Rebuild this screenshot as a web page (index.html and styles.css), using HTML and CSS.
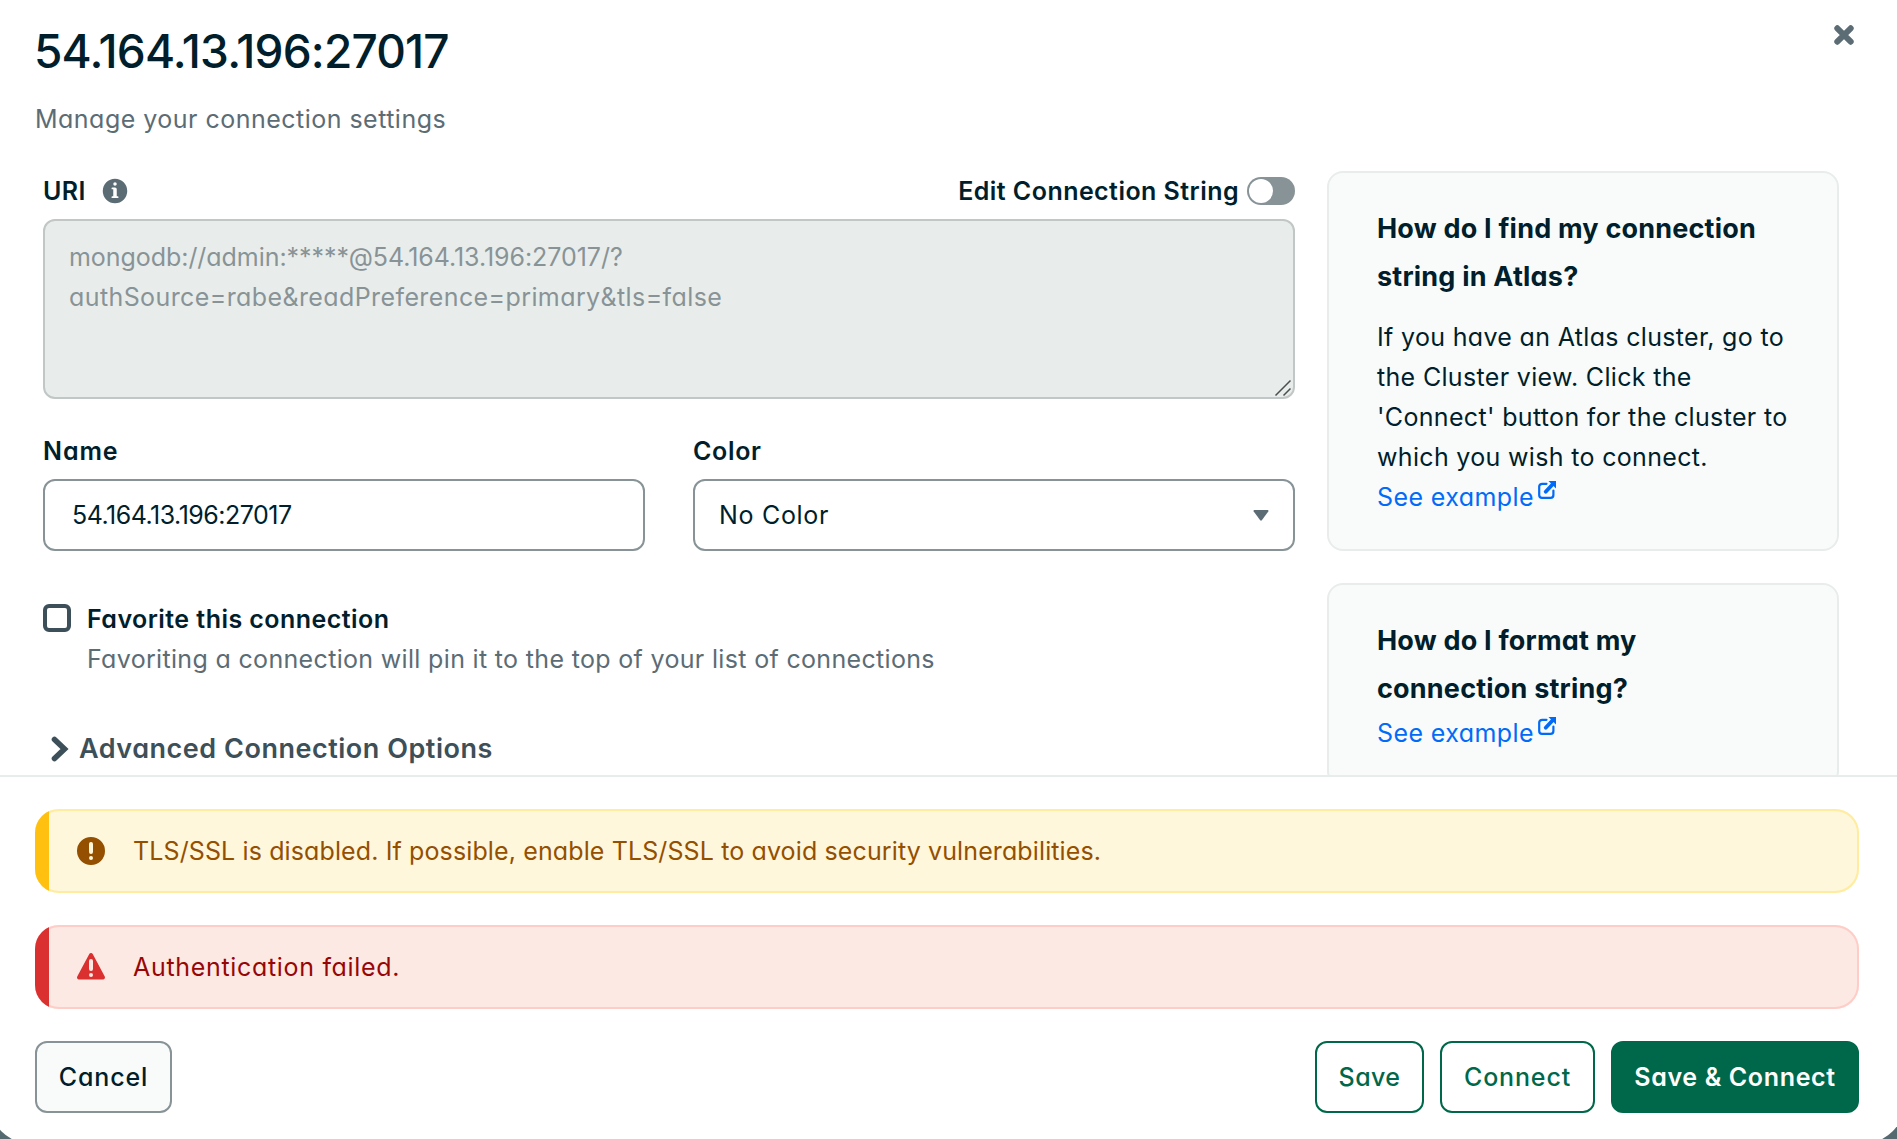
FILE: index.html
```html
<!DOCTYPE html>
<html lang="en">
<head>
<meta charset="utf-8">
<title>Edit connection</title>
<link rel="stylesheet" href="styles.css">
</head>
<body>
<div class="modal" role="dialog">
  <header class="modal-header">
    <div>
      <h1 class="title">54.164.13.196:27017</h1>
      <p class="subtitle">Manage your connection settings</p>
    </div>
    <button class="close" aria-label="Close"><svg width="20" height="20" viewBox="0 0 20 20"><path d="M3.3 3.3 16.7 16.7M16.7 3.3 3.3 16.7" stroke="currentColor" stroke-width="6" stroke-linecap="round"/></svg></button>
  </header>

  <main class="modal-body">
    <form class="form">
      <div class="uri-row">
        <label class="label">URI</label>
        <svg class="info" width="28" height="28" viewBox="0 0 16 16"><path fill="currentColor" fill-rule="evenodd" d="M8 15A7 7 0 1 0 8 1a7 7 0 0 0 0 14ZM9 4a1 1 0 1 1-2 0 1 1 0 0 1 2 0ZM8 6a1 1 0 0 1 1 1v4h.5a.5.5 0 0 1 0 1h-3a.5.5 0 0 1 0-1H7V7h-.5a.5.5 0 0 1 0-1H8Z"/></svg>
        <span class="label toggle-label">Edit Connection String</span>
        <span class="toggle" role="switch" aria-checked="false"></span>
      </div>
      <div class="textarea">
        <div class="uri-host">mongodb://admin:*****@54.164.13.196:27017/?</div>
        <div class="uri-query">authSource=rabe&amp;readPreference=primary&amp;tls=false</div>
        <svg class="grip" width="18" height="18" viewBox="0 0 18 18"><path d="M1.500 16.500 16.500 1.500M9.500 16.500l7-7" stroke="#4a4f50" stroke-width="1.500"/></svg>
      </div>

      <div class="fields">
        <div class="field">
          <label class="label name-label">Name</label>
          <div class="input digits">54.164.13.196:27017</div>
        </div>
        <div class="field">
          <label class="label color-label">Color</label>
          <div class="input select">No Color<svg width="16" height="12" viewBox="0 0 16 12"><path fill="currentColor" d="M1.300 0h13.400q1.300.300.600 1.500L8.800 10.300q-.800.900-1.600 0L.700 1.500Q0 .300 1.300 0Z"/></svg></div>
        </div>
      </div>

      <div class="favorite">
        <span class="checkbox"></span>
        <div>
          <div class="label">Favorite this connection</div>
          <div class="hint">Favoriting a connection will pin it to the top of your list of connections</div>
        </div>
      </div>

      <div class="advanced">
        <svg width="18" height="26" viewBox="0 0 18 26"><path d="M3.500 3.500 13.500 13l-10 9.500" fill="none" stroke="currentColor" stroke-width="5.600" stroke-linecap="round" stroke-linejoin="miter"/></svg>
        Advanced Connection Options
      </div>
    </form>

    <aside class="sidebar">
      <section class="card">
        <h2 class="card-title">How do I find my connection<br>string in Atlas?</h2>
        <p class="card-text">If you have an Atlas cluster, go to<br>the Cluster view. Click the<br>'Connect' button for the cluster to<br>which you wish to connect.</p>
        <a class="link">See example<svg class="ext" width="18" height="18" viewBox="0 0 18 18"><path d="M8.500 2.800H4.300Q1.200 2.800 1.200 5.600v8.400q0 2.800 2.800 2.800h8.600q2.800 0 2.800-2.800V9.500" fill="none" stroke="currentColor" stroke-width="2.200" stroke-linecap="round"/><path d="M7.700 10.700 14.500 3.500" stroke="currentColor" stroke-width="3.800" stroke-linecap="round"/><path d="M10.500 0H18v7.500Z" fill="currentColor"/></svg></a>
      </section>
      <section class="card">
        <h2 class="card-title">How do I format my<br>connection string?</h2>
        <a class="link">See example<svg class="ext" width="18" height="18" viewBox="0 0 18 18"><path d="M8.500 2.800H4.300Q1.200 2.800 1.200 5.600v8.400q0 2.800 2.800 2.800h8.600q2.800 0 2.800-2.800V9.500" fill="none" stroke="currentColor" stroke-width="2.200" stroke-linecap="round"/><path d="M7.700 10.700 14.500 3.500" stroke="currentColor" stroke-width="3.800" stroke-linecap="round"/><path d="M10.500 0H18v7.500Z" fill="currentColor"/></svg></a>
      </section>
    </aside>
  </main>

  <footer class="modal-footer">
    <div class="alert warning">
      <svg width="32" height="32" viewBox="0 0 16 16"><path fill="currentColor" fill-rule="evenodd" d="M8 15A7 7 0 1 0 8 1a7 7 0 0 0 0 14ZM7 4.500a1 1 0 0 1 2 0v4a1 1 0 0 1-2 0v-4Zm2 7a1 1 0 1 1-2 0 1 1 0 0 1 2 0Z"/></svg>
      TLS/SSL is disabled. If possible, enable TLS/SSL to avoid security vulnerabilities.
    </div>
    <div class="alert danger">
      <svg width="32" height="32" viewBox="0 0 16 16"><path fill="currentColor" fill-rule="evenodd" d="M8.864 1.514a.98.98 0 0 0-1.728 0L1.122 12.760c-.359.671.117 1.490.864 1.490h12.028c.747 0 1.223-.819.864-1.490L8.864 1.514ZM7 5a1 1 0 0 1 2 0v4a1 1 0 0 1-2 0V5Zm2 7a1 1 0 1 1-2 0 1 1 0 0 1 2 0Z"/></svg>
      <span class="danger-text">Authentication failed.</span>
    </div>
    <div class="actions">
      <button class="btn cancel">Cancel</button>
      <button class="btn outline save">Save</button>
      <button class="btn outline connect">Connect</button>
      <button class="btn primary">Save &amp; Connect</button>
    </div>
  </footer>
</div>
</body>
</html>
```
FILE: styles.css
```css
* { box-sizing: border-box; }

body {
  margin: 0;
  height: 1139px;
  overflow: hidden;
  background: #556970;
  color: #001e2b;
  font: 400 25px/40px Inter, "Liberation Sans", sans-serif;
  font-feature-settings: "cv11";
  white-space: nowrap;
}

h1, h2, p { margin: 0; }
svg { display: block; flex: none; }

.modal {
  display: flex;
  flex-direction: column;
  width: 1920px;
  height: 1145px;
  margin-left: -13px;
  overflow: hidden;
  background: #fff;
  border-radius: 0 0 48px 48px;
}

.modal-header {
  display: flex;
  justify-content: space-between;
  height: 171px;
  padding: 21px 53px 0 48px;
}
.title { margin-left: -1px; font-size: 46px; font-weight: 500; line-height: 60px; letter-spacing: -0.82px; }
.subtitle { margin-top: 18px; color: #5c6c75; letter-spacing: 0.48px; }
.close {
  align-self: flex-start;
  margin-top: 4px;
  padding: 0;
  border: 0;
  background: none;
  color: #5c6c75;
}

.modal-body {
  display: flex;
  gap: 32px;
  height: 604px;
  padding-left: 56px;
  overflow: hidden;
}
.form { width: 1252px; }
.label { font-weight: 600; letter-spacing: 0.45px; }

.uri-row { display: flex; align-items: center; height: 40px; }
.info { margin-left: 15px; color: #5c6c75; }
.toggle-label { margin-left: auto; }
.toggle {
  width: 48px;
  height: 28px;
  margin: 0 0 0 8px;
  padding: 2px;
  border-radius: 14px;
  background: #889397;
}
.toggle::before {
  content: "";
  display: block;
  width: 24px;
  height: 24px;
  border-radius: 50%;
  background: #fff;
}

.textarea {
  position: relative;
  height: 180px;
  margin-top: 8px;
  padding: 16px 24px;
  border: 2px solid #c1c7c6;
  border-radius: 12px;
  background: #e8edeb;
  color: #889397;
}
.uri-host { letter-spacing: -0.05px; }
.uri-query { letter-spacing: 0.4px; }
.grip { position: absolute; right: 1px; bottom: 0; }

.fields { display: flex; gap: 48px; margin-top: 32px; }
.field { flex: 1; }
.name-label { letter-spacing: 0.9px; }
.color-label { letter-spacing: 0.65px; }
.input {
  height: 72px;
  margin-top: 8px;
  padding: 14px 27px;
  border: 2px solid #889397;
  border-radius: 12px;
}
.digits { letter-spacing: -0.5px; }
.select {
  display: flex;
  align-items: center;
  justify-content: space-between;
  padding: 0 24px;
  letter-spacing: 0.7px;
}
.select svg { margin-top: 1px; color: #5c6c75; }

.favorite { display: flex; gap: 16px; margin-top: 48px; }
.checkbox {
  width: 28px;
  height: 28px;
  margin-top: 5px;
  border: 4px solid #3d4f58;
  border-radius: 6px;
}
.hint { color: #5c6c75; letter-spacing: 0.33px; }

.advanced {
  display: flex;
  align-items: center;
  gap: 10px;
  margin: 50px 0 0 8px;
  color: #3d4f58;
  font-size: 27px;
  font-weight: 600;
  letter-spacing: 0.52px;
}

.sidebar { display: flex; flex-direction: column; gap: 32px; width: 512px; }
.card {
  flex: none;
  padding: 32px 48px;
  border: 2px solid #e8edeb;
  border-radius: 16px;
  background: #f9fbfa;
}
.card-title { font-size: 27px; font-weight: 700; line-height: 48px; letter-spacing: 0.2px; }
.card-text { margin-top: 16px; letter-spacing: 0.33px; }
.link { display: flex; color: #016bf8; letter-spacing: 0.4px; }
.ext { margin: 4px 0 0 4px; }

.modal-footer {
  display: flex;
  flex-direction: column;
  gap: 32px;
  padding: 32px 48px;
  border-top: 2px solid #e8edeb;
}
.alert {
  position: relative;
  display: flex;
  align-items: center;
  gap: 26px;
  height: 84px;
  padding-left: 40px;
  overflow: hidden;
  border-radius: 24px;
  letter-spacing: 0.12px;
}
.alert::before { content: ""; position: absolute; inset: 0 auto 0 0; width: 14px; }
.warning { background: #fef7db; color: #944f01; box-shadow: inset 0 0 0 2px #ffec9e; }
.warning::before { background: #ffc010; }
.danger { background: #fce9e4; color: #970606; box-shadow: inset 0 0 0 2px #ffcdc7; }
.danger::before { background: #db3030; }
.danger svg { color: #db3030; }
.danger-text { letter-spacing: 0.68px; }

.actions { display: flex; gap: 16px; }
.btn {
  height: 72px;
  padding: 0;
  border: 2px solid #00684a;
  border-radius: 12px;
  font: inherit;
  font-weight: 500;
  font-feature-settings: inherit;
  letter-spacing: 0.85px;
  background: #fff;
  color: #00684a;
}
.cancel { width: 137px; margin-right: auto; border-color: #889397; background: #f9fbfa; color: #001e2b; }
.save { width: 109px; letter-spacing: 0.4px; }
.connect { width: 155px; }
.primary { width: 248px; background: #00684a; color: #fff; font-weight: 600; letter-spacing: 0.65px; }
```
